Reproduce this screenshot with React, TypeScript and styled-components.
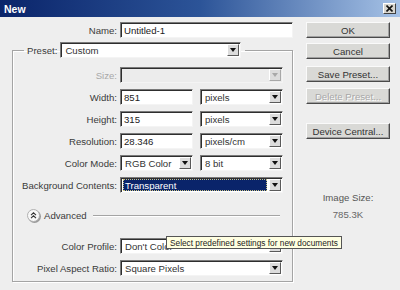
import React from "react";
import styled, { createGlobalStyle } from "styled-components";

const Global = createGlobalStyle`
	html, body {
		margin: 0;
		padding: 0;
		background: #eeeeee;
	}
	body {
		font-family: "Liberation Sans", Arial, sans-serif;
		font-size: 9.6px;
		color: #333;
	}
`;

function Arrow({ disabled }: { disabled?: boolean }) {
	return (
		<ArrowBtn $disabled={disabled}>
			<svg width="6" height="4" viewBox="0 0 6 4">
				<path d="M0 0H6L3 4Z" fill={disabled ? "#a8a8a8" : "#111"} />
			</svg>
		</ArrowBtn>
	);
}

function Select({
	w,
	value,
	disabled,
	selected,
}: {
	w: number;
	value?: string;
	disabled?: boolean;
	selected?: boolean;
}) {
	return (
		<SelectBox $w={w} $disabled={disabled}>
			<SelectValue $selected={selected}>{value}</SelectValue>
			<Arrow disabled={disabled} />
		</SelectBox>
	);
}

function App() {
	return (
		<Dialog>
			<Global />
			<TitleBar>
				<Title>New</Title>
				<CloseBtn>
					<svg width="7" height="7" viewBox="0 0 7 7">
						<path d="M0.5 0.5L6.5 6.5M6.5 0.5L0.5 6.5" stroke="#111" strokeWidth="1.6" />
					</svg>
				</CloseBtn>
			</TitleBar>
			<Body>
				<LeftCol>
					<NameRow>
						<Label $w={117}>Name:</Label>
						<TextBox $w={173}>Untitled-1</TextBox>
					</NameRow>
					<Group>
						<Legend>
							<Label>Preset:</Label>
							<Select w={181} value="Custom" />
						</Legend>
						<Row>
							<Label $w={104} $disabled>
								Size:
							</Label>
							<Select w={163} disabled />
						</Row>
						<Row>
							<Label $w={104}>Width:</Label>
							<Pair>
								<TextBox $w={73}>851</TextBox>
								<Select w={83} value="pixels" />
							</Pair>
						</Row>
						<Row>
							<Label $w={104}>Height:</Label>
							<Pair>
								<TextBox $w={73}>315</TextBox>
								<Select w={83} value="pixels" />
							</Pair>
						</Row>
						<Row>
							<Label $w={104}>Resolution:</Label>
							<Pair>
								<TextBox $w={73}>28.346</TextBox>
								<Select w={83} value="pixels/cm" />
							</Pair>
						</Row>
						<Row>
							<Label $w={104}>Color Mode:</Label>
							<Pair>
								<Select w={73} value="RGB Color" />
								<Select w={83} value="8 bit" />
							</Pair>
						</Row>
						<Row>
							<Label $w={104}>Background Contents:</Label>
							<Select w={163} value="Transparent" selected />
						</Row>
						<AdvancedRow>
							<Toggle>
								<svg width="7" height="7" viewBox="0 0 7 7">
									<path d="M1 3.2L3.5 0.8L6 3.2M1 6.2L3.5 3.8L6 6.2" stroke="#333" strokeWidth="1.1" fill="none" />
								</svg>
							</Toggle>
							<span>Advanced</span>
							<Rule />
						</AdvancedRow>
						<Row $mt={16}>
							<Label $w={104}>Color Profile:</Label>
							<Select w={163} value="Don't Color" />
						</Row>
						<Row>
							<Label $w={104}>Pixel Aspect Ratio:</Label>
							<Select w={163} value="Square Pixels" />
						</Row>
					</Group>
				</LeftCol>
				<RightCol>
					<Button>OK</Button>
					<Button $mt={5}>Cancel</Button>
					<Button $mt={7}>Save Preset...</Button>
					<Button $mt={6} $disabled>
						Delete Preset...
					</Button>
					<Button $mt={19}>Device Central...</Button>
					<SizeLabel>Image Size:</SizeLabel>
					<SizeValue>785.3K</SizeValue>
				</RightCol>
			</Body>
			<Tooltip>Select predefined settings for new documents</Tooltip>
		</Dialog>
	);
}

export default App;

const Dialog = styled.div`
	position: relative;
	width: 400px;
	height: 290px;
	overflow: hidden;
	background: #eeeeee;
`;

const TitleBar = styled.div`
	height: 17px;
	padding: 0 4px 0 4px;
	display: flex;
	align-items: center;
	justify-content: space-between;
	background: linear-gradient(to right, #0a246a 0%, #2c5498 50%, #a6c2e6 100%);
`;

const Title = styled.span`
	color: #fff;
	font-weight: bold;
	font-size: 10.5px;
`;

const CloseBtn = styled.div`
	width: 13px;
	height: 11px;
	box-sizing: border-box;
	display: flex;
	align-items: center;
	justify-content: center;
	background: #d8d6cf;
	border: 1px solid;
	border-color: #fff #404040 #404040 #fff;
`;

const Body = styled.div`
	display: flex;
	padding-top: 5px;
`;

const LeftCol = styled.div`
	width: 306px;
	display: flex;
	flex-direction: column;
`;

const NameRow = styled.div`
	display: flex;
	align-items: center;
	gap: 3px;
`;

const Label = styled.span<{ $w?: number; $disabled?: boolean }>`
	${(p) => (p.$w ? `width: ${p.$w}px;` : "")}
	flex: none;
	text-align: right;
	white-space: nowrap;
	color: ${(p) => (p.$disabled ? "#a8a8a8" : "#3a3a3a")};
`;

const TextBox = styled.div<{ $w: number }>`
	width: ${(p) => p.$w}px;
	height: 16px;
	box-sizing: border-box;
	padding: 0 3px;
	display: flex;
	align-items: center;
	background: #fff;
	color: #222;
	border: 1px solid;
	border-color: #7a7a7a #f4f4f4 #f4f4f4 #7a7a7a;
	box-shadow: inset 1px 1px 0 #2e2e2e;
`;

const Group = styled.fieldset`
	margin: 4px 0 0 12px;
	width: 281px;
	box-sizing: border-box;
	padding: 9px 0 5px 0;
	border: 1px solid #a4a4a4;
	box-shadow: 1px 1px 0 #fff, inset 1px 1px 0 #fff;
	display: flex;
	flex-direction: column;
	gap: 6px;
	min-width: 0;
`;

const Legend = styled.legend`
	margin-left: 11px;
	padding: 0 4px 0 3px;
	display: flex;
	align-items: center;
	gap: 3px;
`;

const Row = styled.div<{ $mt?: number }>`
	display: flex;
	align-items: center;
	gap: 3px;
	height: 16px;
	${(p) => (p.$mt ? `margin-top: ${p.$mt - 6}px;` : "")}
`;

const Pair = styled.div`
	display: flex;
	gap: 7px;
`;

const SelectBox = styled.div<{ $w: number; $disabled?: boolean }>`
	width: ${(p) => p.$w}px;
	height: 16px;
	box-sizing: border-box;
	padding: 1px 1px 1px 2px;
	display: flex;
	align-items: center;
	background: ${(p) => (p.$disabled ? "#ececec" : "#fff")};
	border: 1px solid;
	border-color: #7a7a7a #f4f4f4 #f4f4f4 #7a7a7a;
	box-shadow: inset 1px 1px 0 #2e2e2e;
`;

const SelectValue = styled.div<{ $selected?: boolean }>`
	flex: 1;
	min-width: 0;
	height: 12px;
	margin-right: 2px;
	padding: 0 2px;
	display: flex;
	align-items: center;
	white-space: nowrap;
	color: ${(p) => (p.$selected ? "#fff" : "#333")};
	background: ${(p) => (p.$selected ? "#0a246a" : "transparent")};
	outline: ${(p) => (p.$selected ? "1px dotted #c8c080" : "none")};
	outline-offset: -1px;
`;

const ArrowBtn = styled.div<{ $disabled?: boolean }>`
	flex: none;
	width: 12px;
	height: 12px;
	box-sizing: border-box;
	display: flex;
	align-items: center;
	justify-content: center;
	background: #dcdcdc;
	border: 1px solid;
	border-color: #fff #5a5a5a #5a5a5a #fff;
	${(p) => (p.$disabled ? "border-color: #fff #a8a8a8 #a8a8a8 #fff;" : "")}
`;

const AdvancedRow = styled.div`
	margin-top: 9px;
	height: 14px;
	padding: 0 12px 0 14px;
	display: flex;
	align-items: center;
	gap: 4px;
	color: #3a3a3a;
`;

const Toggle = styled.div`
	width: 13px;
	height: 13px;
	box-sizing: border-box;
	border-radius: 50%;
	display: flex;
	align-items: center;
	justify-content: center;
	background: #f8f8f8;
	border: 1px solid #b0b0b0;
	box-shadow: 1px 1px 0 #9a9a9a;
`;

const Rule = styled.div`
	flex: 1;
	margin-left: 2px;
	height: 1px;
	background: #a4a4a4;
	box-shadow: 0 1px 0 #fff;
`;

const RightCol = styled.div`
	width: 84px;
	display: flex;
	flex-direction: column;
	align-items: stretch;
`;

const Button = styled.div<{ $mt?: number; $disabled?: boolean }>`
	height: 16px;
	box-sizing: border-box;
	margin-top: ${(p) => p.$mt ?? 0}px;
	display: flex;
	align-items: center;
	justify-content: center;
	background: #d9d9d6;
	border: 1px solid;
	border-color: #fafafa #4a4a4a #4a4a4a #fafafa;
	box-shadow: inset -1px -1px 0 #a0a0a0;
	color: ${(p) => (p.$disabled ? "#a8a8a8" : "#333")};
	${(p) => (p.$disabled ? "text-shadow: 1px 1px 0 #fff;" : "")}
`;

const SizeLabel = styled.div`
	margin-top: 53px;
	text-align: center;
	color: #555;
`;

const SizeValue = styled.div`
	margin-top: 6px;
	text-align: center;
	color: #666;
`;

const Tooltip = styled.div`
	position: absolute;
	left: 166px;
	top: 236px;
	height: 13px;
	box-sizing: border-box;
	padding: 0 3px;
	display: flex;
	align-items: center;
	font-size: 8.3px;
	white-space: nowrap;
	color: #222;
	background: #ffffe1;
	border: 1px solid #555;
`;
